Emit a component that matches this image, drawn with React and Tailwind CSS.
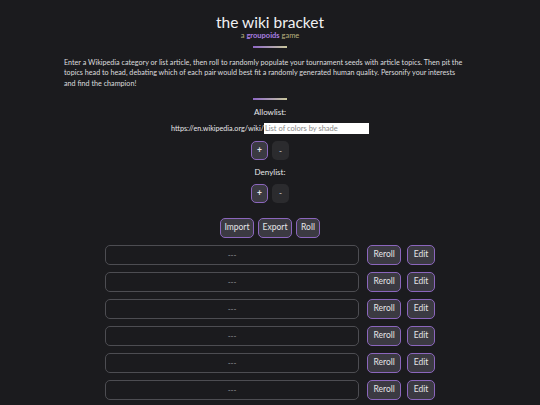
export default function App() {
    const rows = [0, 1, 2, 3, 4, 5];
    const btn = 'bg-[#3b3a42] border-[1.5px] border-[#8b66bd] rounded-[5px] text-[#e4e4e6] text-[8.5px] leading-none';

    return (
        <div className="min-h-[405px] w-[540px] bg-[#1b1b1e] text-[#e6e6e8] overflow-hidden" style={{ fontFamily: 'Lato, "Noto Sans", sans-serif' }}>
            <div className="flex flex-col items-center pt-[12px]">
                <h1 className="text-[15.5px] leading-[20px] text-[#f0f0f2]">the wiki bracket</h1>
                <p className="text-[7.5px] leading-[9px] text-[#b9b27e] -mt-[1.5px]">
                    a <span className="text-[#a87ee0] font-bold">groupoids</span> game
                </p>
                <div className="w-[34px] h-[1.5px] mt-[6.5px] bg-gradient-to-r from-[#8e66c4] to-[#c9c79a]" />

                <p className="w-[412px] mt-[10px] text-[7.2px] leading-[10.5px] text-[#dcdcdf]">
                    Enter a Wikipedia category or list article, then roll to randomly populate your tournament seeds with article topics. Then pit the topics head to head, debating which of each pair would best fit a randomly generated human quality. Personify your interests<br />and find the champion!
                </p>

                <div className="w-[34px] h-[1.5px] mt-[9px] bg-gradient-to-r from-[#8e66c4] to-[#c9c79a]" />

                <p className="text-[8px] leading-[10px] mt-[7.5px]">Allowlist:</p>
                <div className="flex items-center mt-[5.5px] text-[7.2px] leading-[11px]">
                    <span>https://en.wikipedia.org/wiki/</span>
                    <input
                        className="w-[105px] h-[11px] bg-white text-[7.5px] text-black px-[1px] outline-none placeholder:text-[#8a8a8a]"
                        placeholder="List of colors by shade"
                    />
                </div>
                <div className="flex gap-[4px] mt-[7.5px]">
                    <button className={`${btn} w-[17px] h-[19px] font-bold`}>+</button>
                    <button className="w-[17px] h-[19px] rounded-[5px] bg-[#2b2b2e] text-[8px] text-[#e6e6e8]">-</button>
                </div>

                <p className="text-[8px] leading-[10px] mt-[7px]">Denylist:</p>
                <div className="flex gap-[4px] mt-[6.5px]">
                    <button className={`${btn} w-[17px] h-[19px] font-bold`}>+</button>
                    <button className="w-[17px] h-[19px] rounded-[5px] bg-[#2b2b2e] text-[8px] text-[#e6e6e8]">-</button>
                </div>

                <div className="flex gap-[4px] mt-[15px]">
                    <button className={`${btn} h-[20px] w-[34px]`}>Import</button>
                    <button className={`${btn} h-[20px] w-[34px]`}>Export</button>
                    <button className={`${btn} h-[20px] w-[24px]`}>Roll</button>
                </div>

                <div className="flex flex-col gap-[7px] mt-[7px] w-[330px]">
                    {rows.map((r) => (
                        <div key={r} className="flex items-center">
                            <div className="w-[255px] h-[20px] rounded-[5px] border border-[#4d4d52] flex items-center justify-center text-[8px] text-[#9a9a9e]">
                                ---
                            </div>
                            <button className={`${btn} h-[20px] w-[34px] ml-[8px]`}>Reroll</button>
                            <button className={`${btn} h-[20px] w-[28px] ml-[6px]`}>Edit</button>
                        </div>
                    ))}
                </div>
            </div>
        </div>
    );
}
